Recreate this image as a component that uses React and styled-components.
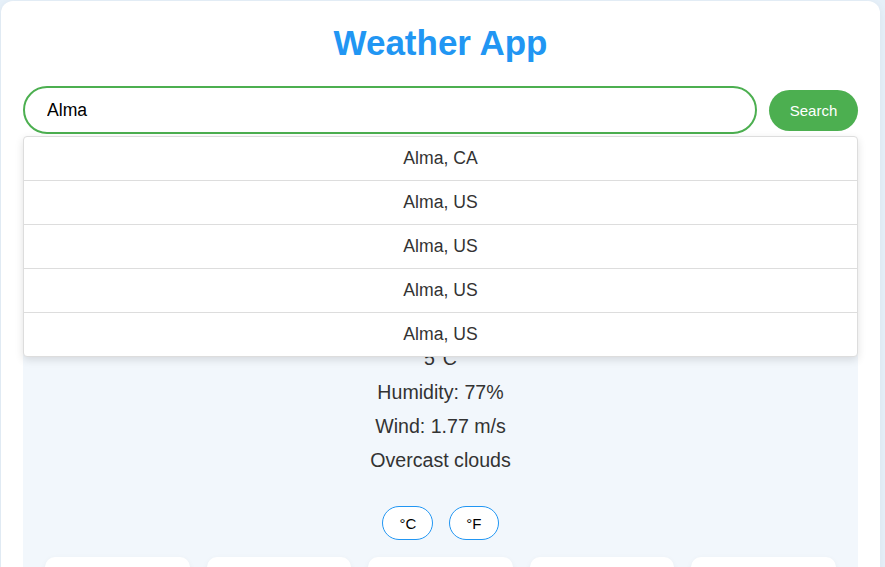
import styled, { createGlobalStyle } from "styled-components";

const GlobalStyle = createGlobalStyle`
  body {
    margin: 0;
    background: #e6f0f9;
    font-family: "Liberation Sans", Arial, sans-serif;
  }
`;

const Card = styled.div`
  margin: 1px 5px 0 1px;
  background: #fff;
  border-radius: 12px;
  padding: 22px;
  box-shadow: 0 2px 8px rgba(0, 0, 0, 0.06);
`;

const Title = styled.h1`
  margin: 0 0 23px;
  text-align: center;
  color: #2196f3;
  font-size: 35px;
  line-height: 40px;
  font-weight: bold;
`;

const SearchRow = styled.div`
  position: relative;
  display: flex;
  align-items: center;
  gap: 12px;
`;

const Input = styled.input`
  flex: 1;
  height: 48px;
  box-sizing: border-box;
  border: 2px solid #4caf50;
  border-radius: 24px;
  padding: 0 22px;
  font-family: inherit;
  font-size: 17.6px;
  color: #000;
  outline: none;
`;

const SearchButton = styled.button`
  height: 41px;
  width: 89px;
  border: none;
  border-radius: 21px;
  background: #4caf50;
  color: #fff;
  font-family: inherit;
  font-size: 15px;
  cursor: pointer;
`;

const Suggestions = styled.ul`
  position: absolute;
  top: 50px;
  left: 0;
  right: 0;
  margin: 0;
  padding: 0;
  list-style: none;
  background: #fff;
  border: 1px solid #ddd;
  border-radius: 4px;
  box-shadow: 0 3px 8px rgba(0, 0, 0, 0.12);
  z-index: 10;
`;

const Suggestion = styled.li`
  height: 43px;
  line-height: 43px;
  text-align: center;
  font-size: 17.6px;
  color: #333;
  border-bottom: 1px solid #ddd;
  cursor: pointer;

  &:last-child {
    border-bottom: none;
  }
`;

const Panel = styled.div`
  margin-top: 20px;
  padding: 22px 22px 30px;
  background: #f2f7fc;
  border-radius: 10px;
  text-align: center;
  color: #333;
`;

const IconBox = styled.div`
  width: 100px;
  height: 138px;
  margin: 0 auto 33px;
  display: flex;
  align-items: flex-end;
`;

const Line = styled.p`
  margin: 12px 0;
  font-size: 19.6px;
  line-height: 22px;
`;

const Units = styled.div`
  display: flex;
  justify-content: center;
  gap: 16px;
  margin-top: 35px;
`;

const UnitButton = styled.button`
  height: 34px;
  padding: 0 16px;
  border: 1px solid #2196f3;
  border-radius: 17px;
  background: #fff;
  color: #000;
  font-family: inherit;
  font-size: 15px;
  cursor: pointer;
`;

const Forecast = styled.div`
  display: grid;
  grid-template-columns: repeat(5, 1fr);
  gap: 17px;
  margin-top: 17px;
`;

const Day = styled.div`
  background: #fff;
  border-radius: 10px;
  padding: 24px 8px 14px;
  box-shadow: 0 2px 6px rgba(0, 0, 0, 0.05);
  font-size: 15px;
  color: #333;
`;

const Cloud = () => (
  <svg width="100" height="100" viewBox="0 0 100 100">
    <path
      d="M28 72h46a16 16 0 0 0 0-32 22 22 0 0 0-42-4 18 18 0 0 0-4 36z"
      fill="#b0bec5"
    />
  </svg>
);

const suggestions = ["Alma, CA", "Alma, US", "Alma, US", "Alma, US", "Alma, US"];
const days = [
  ["Mon", "4°C"],
  ["Tue", "6°C"],
  ["Wed", "3°C"],
  ["Thu", "5°C"],
  ["Fri", "7°C"],
];

export default function App() {
  return (
    <>
      <GlobalStyle />
      <Card>
        <Title>Weather App</Title>
        <SearchRow>
          <Input defaultValue="Alma" />
          <SearchButton>Search</SearchButton>
          <Suggestions>
            {suggestions.map((s, i) => (
              <Suggestion key={i}>{s}</Suggestion>
            ))}
          </Suggestions>
        </SearchRow>
        <Panel>
          <IconBox>
            <Cloud />
          </IconBox>
          <Line>5°C</Line>
          <Line>Humidity: 77%</Line>
          <Line>Wind: 1.77 m/s</Line>
          <Line>Overcast clouds</Line>
          <Units>
            <UnitButton>°C</UnitButton>
            <UnitButton>°F</UnitButton>
          </Units>
          <Forecast>
            {days.map(([d, t]) => (
              <Day key={d}>
                <div>{d}</div>
                <Cloud />
                <div>{t}</div>
              </Day>
            ))}
          </Forecast>
        </Panel>
      </Card>
    </>
  );
}
